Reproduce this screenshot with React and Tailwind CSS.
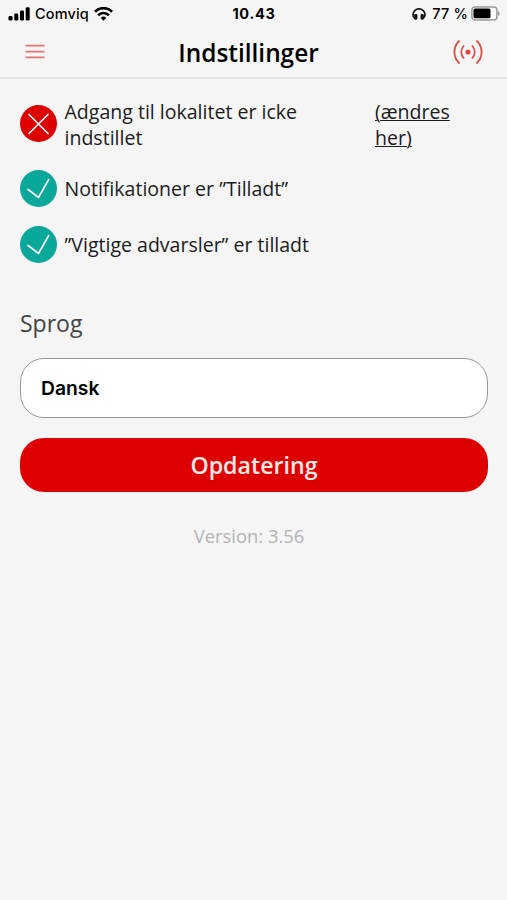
const STATUSES = [
  {
    id: "location",
    ok: false,
    text: "Adgang til lokalitet er icke indstillet",
    link: "(ændres her)",
  },
  { id: "notifications", ok: true, text: "Notifikationer er ”Tilladt”" },
  { id: "warnings", ok: true, text: "”Vigtige advarsler” er tilladt" },
];

function StatusBar() {
  return (
    <div className="grid grid-cols-[1fr_auto_1fr] items-center h-[27px] pl-2 pr-[7px] font-['Inter',sans-serif] text-[14.5px] text-black">
      <div className="flex items-center">
        <svg className="w-[22px] h-[14px]" viewBox="0 0 22 14" fill="#000">
          <rect x="0.5" y="9" width="4" height="4.5" rx="1.2" />
          <rect x="6.3" y="6.5" width="4" height="7" rx="1.2" />
          <rect x="12" y="3.5" width="4" height="10" rx="1.2" />
          <rect x="17.7" y="0.3" width="4" height="13.2" rx="1.2" />
        </svg>
        <span className="ml-[5px] font-medium tracking-[0.01em]">Comviq</span>
        <svg className="ml-[5px] w-[19px] h-[14px]" viewBox="0 0 19 14" fill="none" stroke="#000" strokeWidth="2.7">
          <path d="M1 4.7a12 12 0 0 1 17 0" />
          <path d="M4.1 8.2a7.7 7.7 0 0 1 10.8 0" />
          <path d="M9.5 13.7 6.7 10.9a4 4 0 0 1 5.6 0z" fill="#000" stroke="none" />
        </svg>
      </div>
      <span className="font-bold tracking-[0.05em]">10.43</span>
      <div className="flex items-center justify-end">
        <svg className="w-[14px] h-[12px]" viewBox="0 0 14 12" fill="none" stroke="#111" strokeWidth="1.7">
          <path d="M3 10.5C1.5 9.5 1 8 1 6.5a6 5.6 0 0 1 12 0c0 1.500-.5 3-2 4" />
          <rect x="3" y="6.8" width="1.6" height="4" rx=".5" fill="#111" />
          <rect x="9.4" y="6.8" width="1.6" height="4" rx=".5" fill="#111" />
        </svg>
        <span className="ml-[6px] font-medium tracking-[0.01em] whitespace-nowrap">77 %</span>
        <svg className="ml-[3px] w-[29px] h-[15px]" viewBox="0 0 29 15">
          <rect x="0.9" y="0.9" width="25" height="13" rx="3" fill="#fff" stroke="#999" strokeWidth="1.5" />
          <rect x="2.5" y="2.5" width="17" height="9.7" rx="1.5" fill="#000" />
          <path d="M26.8 5c2.5.8 2.5 4 0 4.8z" fill="#999" />
        </svg>
      </div>
    </div>
  );
}

function Header() {
  return (
    <header className="grid grid-cols-[1fr_auto_1fr] items-center h-[52px] pl-[25px] pr-[24px] border-b-2 border-[#e6e6e6] text-black">
      <svg className="w-5 h-4" viewBox="0 0 20 16" stroke="#e27670" strokeWidth="1.8">
        <path d="M.5 1.7h19M.5 7.7h19M.5 13.4h19" />
      </svg>
      <h1 className="pr-[11px] pt-[2px] text-[24.4px] font-semibold">Indstillinger</h1>
      <svg className="justify-self-end w-[30px] h-[26px]" viewBox="0 0 30 26" fill="none" stroke="#dc4a40" strokeWidth="1.8">
        <path d="M6.5 1.5C-.3 8-.3 18 6.5 24.5M11 6.5c-3.6 4-3.6 9 0 13M23.5 1.5c6.8 6.5 6.8 16.5 0 23M19 6.5c3.6 4 3.6 9 0 13" />
        <circle cx="15" cy="13" r="2.6" fill="#dc4a40" stroke="none" />
      </svg>
    </header>
  );
}

function StatusIcon({ ok }) {
  return (
    <svg className="shrink-0 w-[37px] h-[37px]" viewBox="0 0 37 37" fill="none" stroke="#fff" strokeWidth="1.6">
      <circle cx="18.5" cy="18.5" r="18.5" fill={ok ? "#0aa79b" : "#dd0000"} stroke="none" />
      {ok ? <path d="m7.5 19 11 8.5L29 9" /> : <path d="m8.5 9 20 20M28.5 9l-20 20" />}
    </svg>
  );
}

function App() {
  return (
    <div className="min-h-screen bg-[#f5f5f5] font-['Open_Sans',sans-serif]">
      <StatusBar />
      <Header />

      <main className="pl-5 pr-[19px] pt-5">
        <ul className="space-y-[19px] text-[19.55px] leading-[26px] text-[#1c1c1c]">
          {STATUSES.map((item) => (
            <li key={item.id} className="flex items-center">
              <div className={item.link ? "pb-[4px]" : ""}>
                <StatusIcon ok={item.ok} />
              </div>
              <p className={item.link ? "ml-[7.5px] w-[310.5px]" : "ml-[7.5px]"}>{item.text}</p>
              {item.link && (
                <a href="#" className="w-[90px] underline decoration-1 underline-offset-1">
                  {item.link}
                </a>
              )}
            </li>
          ))}
        </ul>

        <label className="block mt-[44px] text-[23px] leading-[32px] text-[#444]">Sprog</label>
        <div className="flex items-center mt-[19px] h-[60px] px-5 pt-px rounded-[24px] border border-[#999] bg-white font-['Inter',sans-serif] text-[19.3px] font-semibold text-black">
          Dansk
        </div>
        <button className="block mt-5 w-full h-[54px] rounded-[24px] bg-[#dd0000] text-[23.2px] font-semibold text-[#ffe9e6]">
          Opdatering
        </button>
        <p className="mt-[30px] pr-[10px] text-center text-[18.4px] leading-[27px] text-[#b3b3b3]">Version: 3.56</p>
      </main>
    </div>
  );
}

export default App;
